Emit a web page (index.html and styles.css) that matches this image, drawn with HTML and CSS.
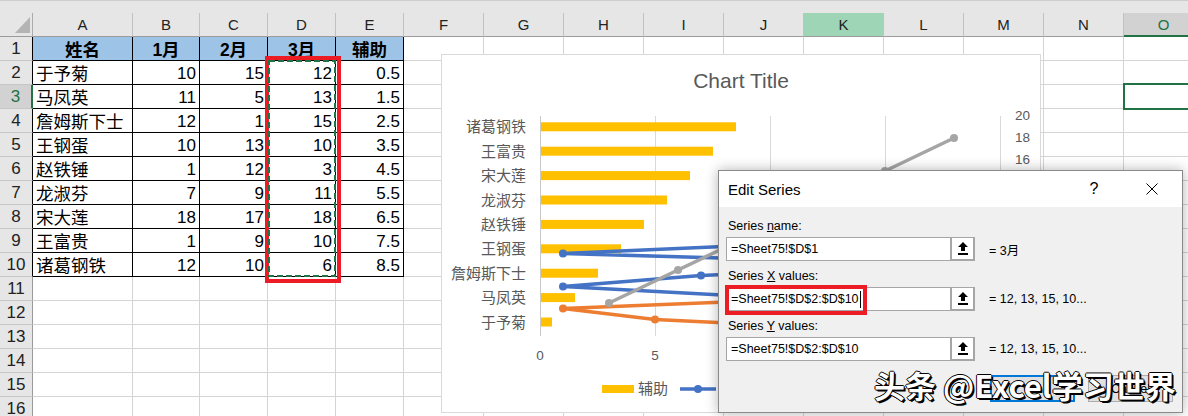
FILE: index.html
```html
<!DOCTYPE html>
<html>
<head>
<meta charset="utf-8">
<link rel="stylesheet" href="styles.css">
</head>
<body>
<div class="topband"></div>
<div class="cols">
  <div class="ch corner"><span class="tri"></span></div>
  <div class="ch">A</div><div class="ch">B</div><div class="ch">C</div><div class="ch">D</div><div class="ch">E</div>
  <div class="ch">F</div><div class="ch">G</div><div class="ch">H</div><div class="ch">I</div><div class="ch">J</div>
  <div class="ch k">K</div><div class="ch">L</div><div class="ch">M</div><div class="ch">N</div><div class="ch o">O</div>
</div>
<div class="sheet">
  <div class="rh tb">1</div><div class="c t hd">姓名</div><div class="c t hd">1月</div><div class="c t hd">2月</div><div class="c t hd">3月</div><div class="c t hd">辅助</div><div class="fill"></div>
  <div class="rh tb">2</div><div class="c t nm">于予菊</div><div class="c t n">10</div><div class="c t n">15</div><div class="c t n">12</div><div class="c t n">0.5</div><div class="fill"></div>
  <div class="rh tb sel">3</div><div class="c t nm">马凤英</div><div class="c t n">11</div><div class="c t n">5</div><div class="c t n">13</div><div class="c t n">1.5</div><div class="fill"></div>
  <div class="rh tb">4</div><div class="c t nm">詹姆斯下士</div><div class="c t n">12</div><div class="c t n">1</div><div class="c t n">15</div><div class="c t n">2.5</div><div class="fill"></div>
  <div class="rh tb">5</div><div class="c t nm">王钢蛋</div><div class="c t n">10</div><div class="c t n">13</div><div class="c t n">10</div><div class="c t n">3.5</div><div class="fill"></div>
  <div class="rh tb">6</div><div class="c t nm">赵铁锤</div><div class="c t n">1</div><div class="c t n">12</div><div class="c t n">3</div><div class="c t n">4.5</div><div class="fill"></div>
  <div class="rh tb">7</div><div class="c t nm">龙淑芬</div><div class="c t n">7</div><div class="c t n">9</div><div class="c t n">11</div><div class="c t n">5.5</div><div class="fill"></div>
  <div class="rh tb">8</div><div class="c t nm">宋大莲</div><div class="c t n">18</div><div class="c t n">17</div><div class="c t n">18</div><div class="c t n">6.5</div><div class="fill"></div>
  <div class="rh tb">9</div><div class="c t nm">王富贵</div><div class="c t n">1</div><div class="c t n">9</div><div class="c t n">10</div><div class="c t n">7.5</div><div class="fill"></div>
  <div class="rh tb">10</div><div class="c t nm">诸葛钢铁</div><div class="c t n">12</div><div class="c t n">10</div><div class="c t n">6</div><div class="c t n">8.5</div><div class="fill"></div>
  <div class="rh">11</div><div class="c"></div><div class="c"></div><div class="c"></div><div class="c"></div><div class="c"></div><div class="fill"></div>
  <div class="rh">12</div><div class="c"></div><div class="c"></div><div class="c"></div><div class="c"></div><div class="c"></div><div class="fill"></div>
  <div class="rh">13</div><div class="c"></div><div class="c"></div><div class="c"></div><div class="c"></div><div class="c"></div><div class="fill"></div>
  <div class="rh">14</div><div class="c"></div><div class="c"></div><div class="c"></div><div class="c"></div><div class="c"></div><div class="fill"></div>
  <div class="rh">15</div><div class="c"></div><div class="c"></div><div class="c"></div><div class="c"></div><div class="c"></div><div class="fill"></div>
  <div class="rh">16</div><div class="c"></div><div class="c"></div><div class="c"></div><div class="c"></div><div class="c"></div><div class="fill"></div>
</div>

<div class="redbox"></div>
<svg class="marquee" width="68" height="217" viewBox="0 0 68 217"><rect x="1" y="1" width="66" height="215" fill="none" stroke="#217346" stroke-width="2" stroke-dasharray="6 3"/></svg>
<div class="selbox"></div>

<div class="chart">
<svg width="600" height="359" viewBox="441 54 600 359">
  <rect x="441.5" y="54.5" width="599" height="358" fill="#fff" stroke="#d9d9d9"/>
  <text x="741" y="88" class="ctitle" text-anchor="middle">Chart Title</text>
  <g stroke="#d9d9d9" stroke-width="1">
    <line x1="540.5" y1="116" x2="540.5" y2="336" stroke="#c9c9c9"/>
    <line x1="655.5" y1="116" x2="655.5" y2="336"/>
    <line x1="770.5" y1="116" x2="770.5" y2="336"/>
    <line x1="885.5" y1="116" x2="885.5" y2="336"/>
    <line x1="1000.5" y1="116" x2="1000.5" y2="336"/>
  </g>
  <g class="cat" text-anchor="end">
    <text x="526" y="327.5">于予菊</text>
    <text x="526" y="303.1">马凤英</text>
    <text x="526" y="278.7">詹姆斯下士</text>
    <text x="526" y="254.3">王钢蛋</text>
    <text x="526" y="229.9">赵铁锤</text>
    <text x="526" y="205.5">龙淑芬</text>
    <text x="526" y="181.1">宋大莲</text>
    <text x="526" y="156.7">王富贵</text>
    <text x="526" y="132.3">诸葛钢铁</text>
  </g>
  <g fill="#ffc000">
    <rect x="541" y="317.5" width="11" height="9"/>
    <rect x="541" y="293.1" width="34" height="9"/>
    <rect x="541" y="268.7" width="57" height="9"/>
    <rect x="541" y="244.3" width="80" height="9"/>
    <rect x="541" y="219.9" width="103" height="9"/>
    <rect x="541" y="195.5" width="126" height="9"/>
    <rect x="541" y="171.1" width="149" height="9"/>
    <rect x="541" y="146.7" width="172" height="9"/>
    <rect x="541" y="122.3" width="195" height="9"/>
  </g>
  <g class="ser" stroke="#4472c4" fill="#4472c4">
    <polyline fill="none" points="770,330.5 793,319.5 816,308.5 770,297.5 563,286.5 701,275.5 954,264.5 563,253.5 816,242.5"/>
    <circle cx="770" cy="330.5" r="4"/><circle cx="793" cy="319.5" r="4"/><circle cx="816" cy="308.5" r="4"/>
    <circle cx="770" cy="297.5" r="4"/><circle cx="563" cy="286.5" r="4"/><circle cx="701" cy="275.5" r="4"/>
    <circle cx="954" cy="264.5" r="4"/><circle cx="563" cy="253.5" r="4"/><circle cx="816" cy="242.5" r="4"/>
  </g>
  <g class="ser" stroke="#ed7d31" fill="#ed7d31">
    <polyline fill="none" points="885,330.5 655,319.5 563,308.5 839,297.5 816,286.5 747,275.5 931,264.5 747,253.5 770,242.5"/>
    <circle cx="885" cy="330.5" r="4"/><circle cx="655" cy="319.5" r="4"/><circle cx="563" cy="308.5" r="4"/>
    <circle cx="839" cy="297.5" r="4"/><circle cx="816" cy="286.5" r="4"/><circle cx="747" cy="275.5" r="4"/>
    <circle cx="931" cy="264.5" r="4"/><circle cx="747" cy="253.5" r="4"/><circle cx="770" cy="242.5" r="4"/>
  </g>
  <g class="ser" stroke="#a5a5a5" fill="#a5a5a5">
    <polyline fill="none" points="816,204 839,193 885,171 770,226 609,303 793,215 954,138 770,226 678,270"/>
    <circle cx="816" cy="204" r="4"/><circle cx="839" cy="193" r="4"/><circle cx="885" cy="171" r="4"/>
    <circle cx="770" cy="226" r="4"/><circle cx="609" cy="303" r="4"/><circle cx="793" cy="215" r="4"/>
    <circle cx="954" cy="138" r="4"/><circle cx="678" cy="270" r="4"/>
  </g>
  <g class="ax" text-anchor="middle">
    <text x="540" y="360">0</text><text x="655" y="360">5</text>
  </g>
  <g class="ax" text-anchor="end">
    <text x="1030" y="119.5">20</text><text x="1030" y="141.5">18</text><text x="1030" y="163.5">16</text>
  </g>
  <rect x="602" y="385" width="32" height="8" fill="#ffc000"/>
  <text x="638" y="394" class="leg">辅助</text>
  <line x1="680" y1="389" x2="716" y2="389" stroke="#4472c4" stroke-width="3.5"/>
  <circle cx="698" cy="389" r="4" fill="#4472c4"/>
</svg>
</div>

<div class="dialog">
  <div class="dtitle">
    <span class="dname">Edit Series</span>
    <span class="help">?</span>
    <span class="close"><svg width="12" height="12" viewBox="0 0 12 12"><path d="M0.5 0.5L11.5 11.5M11.5 0.5L0.5 11.5" stroke="#000" stroke-width="1"/></svg></span>
  </div>
  <div class="dbody">
    <div class="field">
      <div class="lbl">Series <u>n</u>ame:</div>
      <div class="irow">
        <div class="inp">=Sheet75!$D$1</div>
        <div class="rbtn"><svg width="10" height="13" viewBox="0 0 10 13"><path d="M5 0L10 5H7V9H3V5H0Z" fill="#000"/><rect x="0" y="11" width="10" height="2" fill="#000"/></svg></div>
        <div class="val">= 3月</div>
      </div>
    </div>
    <div class="field">
      <div class="lbl">Series <u>X</u> values:</div>
      <div class="irow">
        <div class="inp">=Sheet75!$D$2:$D$10<span class="caret"></span></div>
        <div class="rbtn"><svg width="10" height="13" viewBox="0 0 10 13"><path d="M5 0L10 5H7V9H3V5H0Z" fill="#000"/><rect x="0" y="11" width="10" height="2" fill="#000"/></svg></div>
        <div class="val">= 12, 13, 15, 10...</div>
        <div class="hl"></div>
      </div>
    </div>
    <div class="field">
      <div class="lbl">Series <u>Y</u> values:</div>
      <div class="irow">
        <div class="inp">=Sheet75!$D$2:$D$10</div>
        <div class="rbtn"><svg width="10" height="13" viewBox="0 0 10 13"><path d="M5 0L10 5H7V9H3V5H0Z" fill="#000"/><rect x="0" y="11" width="10" height="2" fill="#000"/></svg></div>
        <div class="val">= 12, 13, 15, 10...</div>
      </div>
    </div>
    <div class="btns">
      <div class="btn ok">OK</div>
      <div class="btn">Cancel</div>
    </div>
  </div>
</div>

<div class="wm">头条 @Excel学习世界</div>
</body>
</html>
```
FILE: styles.css
```css
* { box-sizing: border-box; margin: 0; padding: 0; }
html, body { width: 1188px; height: 416px; overflow: hidden; background: #fff; }
body {
  position: relative;
  font-family: "Liberation Sans", "Noto Sans CJK SC", sans-serif;
  color: #000;
}

.topband { height: 13px; background: #e6e6e6; border-top: 1px solid #cdcdcd; }

.cols, .sheet {
  display: grid;
  grid-template-columns: 33px 100px 67px 68px 68px 68px repeat(10, 80px);
  width: 1204px;
}
.sheet { grid-auto-rows: 24px; }

.ch {
  height: 24px;
  background: #e6e6e6;
  border-right: 1px solid #c2c2c2;
  border-bottom: 1px solid #9b9b9b;
  text-align: center;
  font-size: 15px;
  line-height: 23px;
  color: #222;
}
.ch.k { background: #9fd5b7; }
.ch.o { background: #d2d2d2; color: #217346; border-bottom: 2px solid #217346; }
.corner { position: relative; border-right-color: #ababab; }
.tri {
  position: absolute;
  left: 15px;
  top: 4px;
  width: 15px;
  height: 16px;
  background: #b4b4b4;
  clip-path: polygon(100% 0, 100% 100%, 0 100%);
}

.rh {
  background: #e6e6e6;
  border-right: 1px solid #9b9b9b;
  border-bottom: 1px solid #c6c6c6;
  text-align: center;
  font-size: 17px;
  line-height: 22px;
  padding-top: 1px;
  color: #222;
}
.rh.tb { border-right-color: #000; }
.rh.sel { background: #d2d2d2; color: #217346; border-right: 2px solid #217346; }

.c {
  border-right: 1px solid #d4d4d4;
  border-bottom: 1px solid #d4d4d4;
  font-size: 17px;
  line-height: 22px;
  padding-top: 2px;
  white-space: nowrap;
  overflow: hidden;
}
.c.t { border-color: #000; }
.hd { background: #9dc3e6; font-weight: bold; text-align: center; font-size: 17.5px; }
.n { text-align: right; padding-right: 3px; }
.nm { padding-left: 3px; font-size: 17.5px; }
.fill {
  grid-column: 7 / -1;
  border-bottom: 1px solid #d4d4d4;
  background: repeating-linear-gradient(to right, transparent 0 79px, #d4d4d4 79px 80px);
}

.redbox {
  position: absolute; left: 265px; top: 56px; width: 76px; height: 227px;
  border: 4px solid #ed1c24;
}
.marquee { position: absolute; left: 268px; top: 60px; display: block; }
.selbox {
  position: absolute; left: 1123px; top: 83px; width: 70px; height: 27px;
  border: 2px solid #217346;
}

.chart { position: absolute; left: 441px; top: 54px; width: 600px; height: 359px; }
.chart svg { display: block; }
.ctitle { font-family: "Liberation Sans", sans-serif; font-size: 21px; fill: #595959; }
.cat text, .leg { font-family: "Noto Sans CJK SC", sans-serif; font-size: 15px; fill: #595959; }
.ax text { font-family: "Liberation Sans", sans-serif; font-size: 13.5px; fill: #595959; }
.ser polyline { stroke-width: 3.5; stroke-linejoin: round; stroke-linecap: round; }
.ser circle { stroke: none; }

.dialog {
  position: absolute; left: 718px; top: 170px; width: 465px;
  background: #f0f0f0;
  border: 1px solid #8a8a8a;
  box-shadow: 0 0 12px rgba(0, 0, 0, 0.3);
}
.dtitle {
  height: 36px; background: #fff;
  display: flex; align-items: center;
  padding-left: 9px; font-size: 15px;
}
.dname { flex: 1; }
.help { width: 46px; text-align: center; font-size: 16px; }
.close { width: 46px; margin-left: 12px; margin-right: 7px; display: flex; justify-content: center; }
.dbody { padding: 10px 9px 10px 7px; }
.field + .field { margin-top: 6px; }
.lbl { font-size: 12.5px; line-height: 18px; height: 18px; padding-left: 2px; margin-bottom: 2px; }
.irow { position: relative; display: flex; align-items: center; height: 24px; }
.inp {
  width: 225px; height: 24px; background: #fff;
  border: 1px solid #a6a6a6;
  font-size: 12.5px; line-height: 22px; padding-left: 4px;
  white-space: nowrap;
}
.caret { display: inline-block; width: 1px; height: 17px; background: #000; vertical-align: middle; margin-left: 1px; }
.rbtn {
  width: 24px; height: 24px; background: #fff;
  border: 1px solid #a6a6a6; border-right-width: 2px; border-bottom-width: 2px;
  display: flex; align-items: center; justify-content: center;
}
.val { margin-left: 14px; font-size: 12.5px; }
.hl {
  position: absolute; left: -1px; top: -2px; width: 142px; height: 30px;
  border: 4px solid #ed1c24;
}
.btns { display: flex; justify-content: flex-end; gap: 13px; margin-top: 14px; }
.btn {
  width: 85px; height: 27px; background: #e1e1e1;
  border: 1px solid #adadad; font-size: 12.5px;
  display: flex; align-items: center; justify-content: center;
}
.btn.ok { border: 2px solid #0078d7; }

.wm {
  position: absolute; left: 874px; top: 369px;
  font-family: "Noto Sans CJK SC", sans-serif;
  font-size: 31px; font-weight: bold; line-height: 31px; color: #fff; white-space: nowrap;
  text-shadow: 2px 2px 0 #000, 1px 1px 0 #000, -1px 0 0 #000, 0 -1px 0 #000, 1px 0 0 #000, 0 1px 0 #000;
}
```
